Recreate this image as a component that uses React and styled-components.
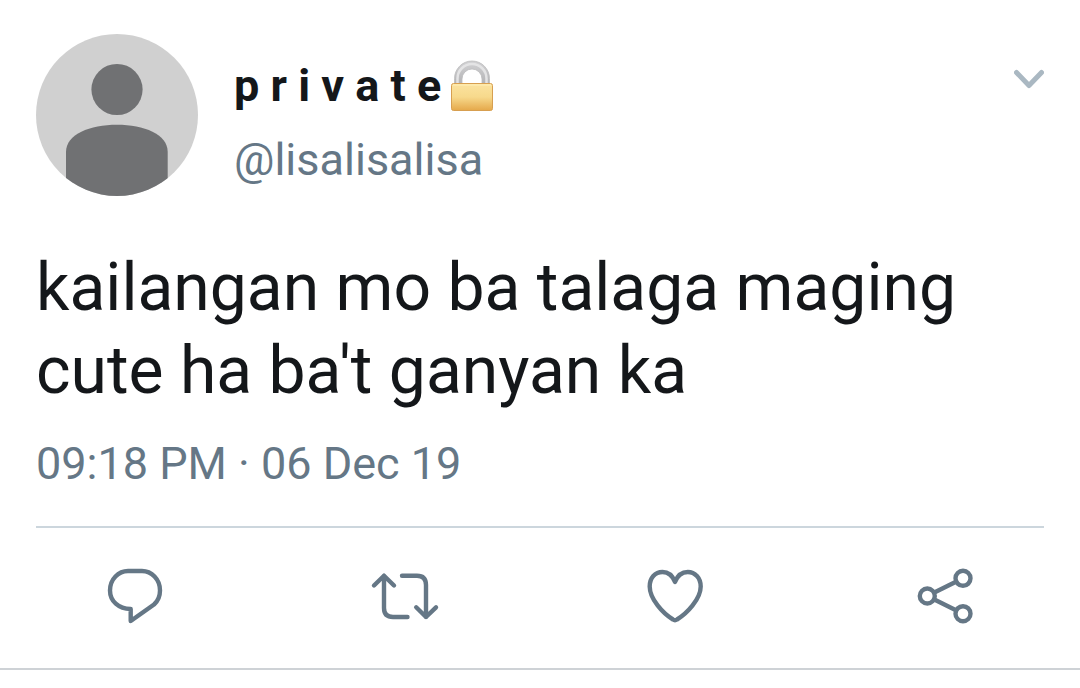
import React from 'react';
import styled, { createGlobalStyle } from 'styled-components';

const GlobalStyle = createGlobalStyle`
  * {
    box-sizing: border-box;
  }

  body {
    margin: 0;
    background: #fff;
    font-family: Roboto, 'Liberation Sans', sans-serif;
  }
`;

const Tweet = styled.article`
  padding-top: 34px;
  border-bottom: 2px solid #ced2d6;
  color: #14171a;
`;

const Content = styled.div`
  margin: 0 36px;
  padding-bottom: 36px;
  border-bottom: 2px solid #ccd6dd;
`;

const Header = styled.header`
  display: flex;
  align-items: flex-start;
  gap: 36px;
`;

const Avatar = styled.svg`
  flex: none;
  width: 162px;
  height: 162px;
  border-radius: 50%;
  background: #d0d0d0;
`;

const Author = styled.div`
  display: flex;
  flex: 1;
  flex-direction: column;
  gap: 22px;
  padding-top: 26px;
`;

const Name = styled.h1`
  display: flex;
  align-items: center;
  gap: 9px;
  height: 52px;
  margin: 0;
  font-size: 45px;
  font-weight: 700;
  line-height: 52px;
`;

const Handle = styled.a`
  color: #657786;
  font-size: 45px;
  line-height: 52px;
  text-decoration: none;
`;

const MenuButton = styled.button`
  display: flex;
  margin-top: 34px;
  padding: 0;
  border: none;
  background: none;
  color: #aab8c2;
  cursor: pointer;
`;

const Text = styled.p`
  margin: 50px 0 26px;
  font-size: 66px;
  line-height: 83px;
`;

const Time = styled.time`
  display: block;
  color: #657786;
  font-size: 45px;
  line-height: 52px;
`;

const Actions = styled.div`
  display: grid;
  grid-template-columns: repeat(4, 1fr);
  justify-items: center;
  padding: 32px 0 36px;
`;

const ActionButton = styled.button`
  display: flex;
  padding: 0;
  border: none;
  background: none;
  color: #657786;
  cursor: pointer;
`;

const Icon = styled.svg`
  width: 72px;
  height: 72px;
  fill: none;
  stroke: currentColor;
  stroke-width: 4.4;
  stroke-linecap: round;
  stroke-linejoin: round;
`;

const ChevronIcon = styled(Icon)`
  width: 30px;
  height: 24px;
  stroke-width: 5;
`;

const LockIcon = styled.svg`
  width: 44px;
  height: 52px;
`;

function Lock() {
  return (
    <LockIcon viewBox="0 0 44 52" role="img" aria-label="locked">
      <defs>
        <linearGradient id="lock-body" x1="0" y1="0" x2="0" y2="1">
          <stop offset="0" stopColor="#fbe3a0" />
          <stop offset="0.5" stopColor="#f7d98c" />
          <stop offset="1" stopColor="#e5a84a" />
        </linearGradient>
        <linearGradient id="lock-shackle" x1="0" y1="0" x2="0" y2="1">
          <stop offset="0" stopColor="#d2d2d4" />
          <stop offset="1" stopColor="#b2b2b4" />
        </linearGradient>
      </defs>
      <path
        d="M4.5 25V18.5a17.5 17.5 0 0 1 35 0V25h-7.5v-6a10 10 0 0 0-20 0v6z"
        fill="url(#lock-shackle)"
        stroke="#bcbcbe"
        strokeWidth="0.8"
      />
      <path d="M7.5 23V18.5a14.5 14.5 0 0 1 29 0V23" fill="none" stroke="#e4e4e5" strokeWidth="2.5" />
      <rect x="1.5" y="23.5" width="41" height="27" rx="2" fill="url(#lock-body)" stroke="#d79f50" />
      <path d="M3 25h38" stroke="#fff0b8" strokeWidth="1.2" />
    </LockIcon>
  );
}

const actions = [
  {
    label: 'Reply',
    drawing: (
      <path d="M31.7 49V61L55 44.5C59 41 61 36 61 30.5C61 19 52.5 11 43 11H29C19.5 11 11 19 11 30.5C11 41 19.5 49 31.7 49Z" />
    ),
  },
  {
    label: 'Retweet',
    drawing: (
      <path d="M5 25.5L15 15.7L25 25.5M15 15.7V48Q15 57 24 57H38.5M33 15.7H48Q57 15.7 57 25V57M47.2 47.3L57 57L67 47.3" />
    ),
  },
  {
    label: 'Like',
    drawing: (
      <path d="M36 22C33.5 15.5 29 12 23.5 12C16 12 10.7 18 10.7 26.5C10.7 39 24 53.5 34 59.5Q36 60.8 38 59.5C48 53.5 61.7 39 61.7 26.5C61.7 18 56 12 48.8 12C43 12 38.5 15.5 36 22Z" />
    ),
  },
  {
    label: 'Share',
    drawing: (
      <>
        <circle cx="18.3" cy="36" r="7.5" />
        <circle cx="54" cy="18.3" r="7.5" />
        <circle cx="54" cy="53.7" r="7.5" />
        <path d="M25.3 32.5L47 21.7M25.3 39.5L47 50.3" />
      </>
    ),
  },
];

function App() {
  return (
    <>
      <GlobalStyle />
      <Tweet>
        <Content>
          <Header>
            <Avatar viewBox="0 0 162 162" role="img" aria-label="Profile picture">
              <circle cx="81" cy="55.5" r="25.6" fill="#707173" />
              <path d="M30 118C30 100 54 90.7 81 90.7S131.7 100 131.7 118V162H30Z" fill="#707173" />
            </Avatar>
            <Author>
              <Name>
                p r i v a t e
                <Lock />
              </Name>
              <Handle href="#">@lisalisalisa</Handle>
            </Author>
            <MenuButton type="button" aria-label="More options">
              <ChevronIcon viewBox="0 0 30 24">
                <path d="M2.5 4.5L15 17.5L27.5 4.5" />
              </ChevronIcon>
            </MenuButton>
          </Header>
          <Text>kailangan mo ba talaga maging cute ha ba't ganyan ka</Text>
          <Time>09:18 PM · 06 Dec 19</Time>
        </Content>
        <Actions>
          {actions.map(({ label, drawing }) => (
            <ActionButton key={label} type="button" aria-label={label}>
              <Icon viewBox="0 0 72 72">{drawing}</Icon>
            </ActionButton>
          ))}
        </Actions>
      </Tweet>
    </>
  );
}

export default App;
